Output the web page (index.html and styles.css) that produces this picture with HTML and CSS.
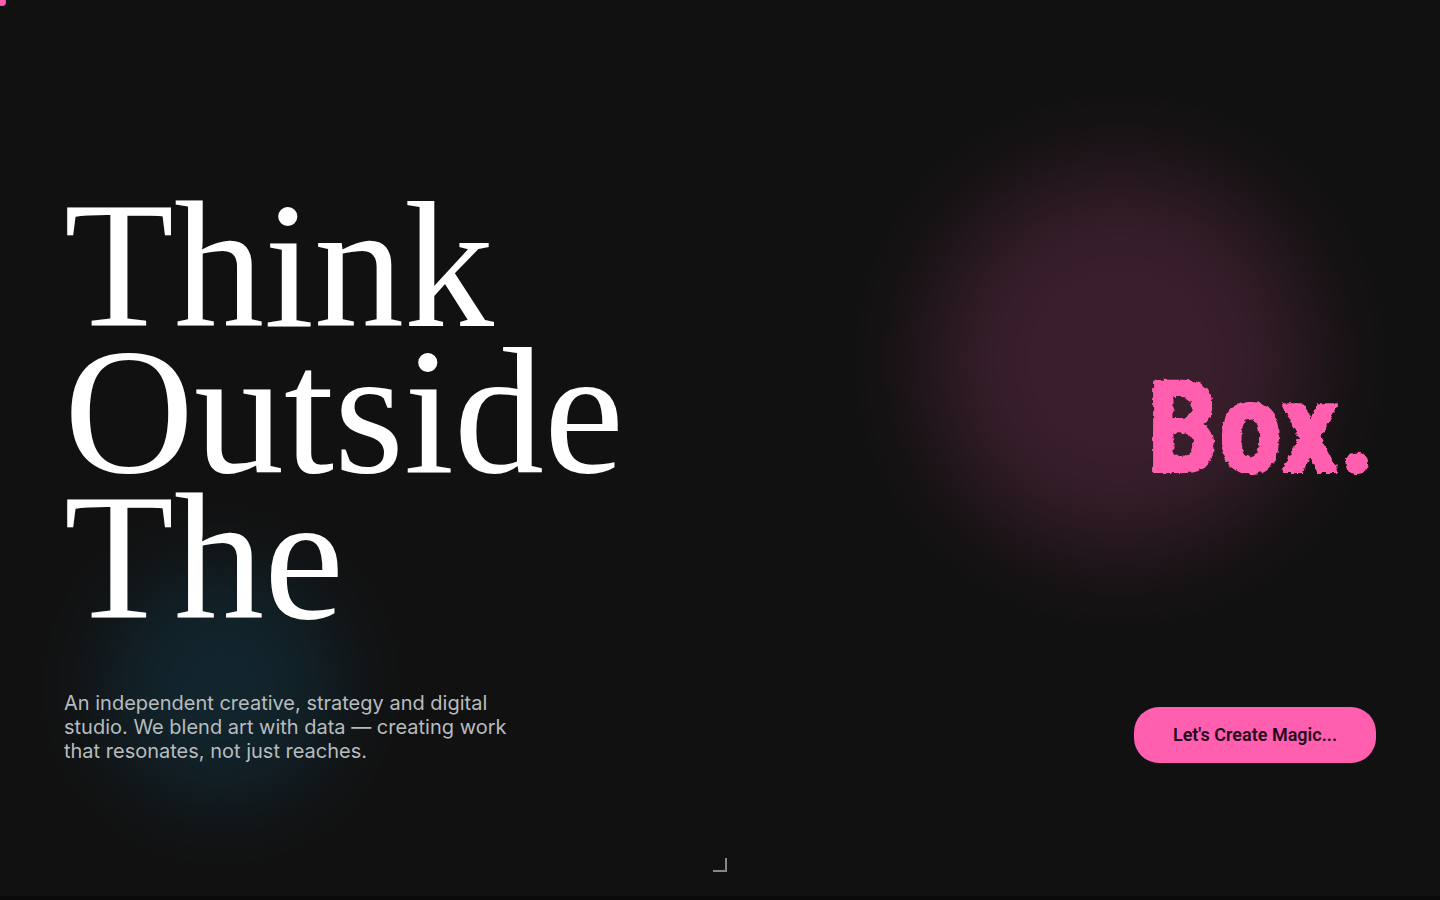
FILE: index.html
```html
<!DOCTYPE html>
<html lang="en">
<head>
  <meta charset="UTF-8" />
  <meta name="viewport" content="width=device-width, initial-scale=1" />
  <title>Think Outside The Box.</title>
  <link rel="stylesheet" href="styles.css">
</head>
<body>
  <div class="cursor"></div>

  <main class="hero">
    <div class="glow glow-pink"></div>
    <div class="glow glow-blue"></div>

    <h1 class="headline">
      <span class="headline-main">Think<br>Outside<br>The</span>
      <span class="headline-box">Box.</span>
    </h1>

    <div class="hero-bottom">
      <p class="intro">An independent creative, strategy and digital studio. We blend art with data — creating work that resonates, not just reaches.</p>
      <a class="cta" href="#contact">Let's Create Magic...</a>
    </div>

    <div class="scroll-hint"></div>
  </main>

  <!-- rough print edge for "Box." -->
  <svg class="defs" width="0" height="0" aria-hidden="true">
    <filter id="rough">
      <feMorphology in="SourceGraphic" operator="dilate" radius="1" result="bold" />
      <feTurbulence type="fractalNoise" baseFrequency="0.2" numOctaves="2" seed="4" result="noise" />
      <feDisplacementMap in="bold" in2="noise" scale="5" xChannelSelector="R" yChannelSelector="G" />
    </filter>
  </svg>
</body>
</html>
```

FILE: styles.css
```css
:root {
  --bg: #111111;
  --pink: #ff5fae;
  --blue: #1898d0;
  --text: #ffffff;
  --muted: #b8bcbf;
}

* {
  box-sizing: border-box;
}

body {
  margin: 0;
  background: var(--bg);
  color: var(--text);
  font-family: Inter, "Liberation Sans", sans-serif;
}

.cursor {
  position: fixed;
  top: -2px;
  left: -2px;
  width: 8px;
  height: 8px;
  border-radius: 50%;
  background: var(--pink);
  z-index: 10;
}

.hero {
  position: relative;
  min-height: 100vh;
  padding: 124px 64px 64px;
  display: flex;
  flex-direction: column;
  justify-content: center;
  gap: 60px;
  overflow: hidden;
  border-bottom: 4px solid #0a0a0a;
}

.glow {
  position: absolute;
  border-radius: 50%;
}

.glow-pink {
  top: 19%;
  right: 9%;
  width: 380px;
  height: 380px;
  background: var(--pink);
  opacity: 0.17;
  filter: blur(50px);
}

.glow-blue {
  bottom: 10%;
  left: 7%;
  width: 240px;
  height: 240px;
  background: var(--blue);
  opacity: 0.14;
  filter: blur(40px);
}

.headline {
  position: relative;
  margin: 0;
  display: flex;
  align-items: center;
  justify-content: space-between;
  font-weight: 400;
}

.headline-main {
  font-family: "Liberation Serif", serif;
  font-size: 180px;
  line-height: 146px;
}

.headline-box {
  padding-top: 32px;
  font-family: "Roboto Condensed", sans-serif;
  font-size: 128px;
  font-weight: 700;
  line-height: 146px;
  color: var(--pink);
  filter: url(#rough);
}

.hero-bottom {
  position: relative;
  display: flex;
  align-items: flex-end;
  justify-content: space-between;
}

.intro {
  margin: 0;
  max-width: 448px;
  font-size: 20px;
  line-height: 24px;
  color: var(--muted);
}

.cta {
  padding: 16px 39px;
  border-radius: 25px;
  background: var(--pink);
  color: #26061c;
  font-family: Roboto, sans-serif;
  font-size: 18px;
  font-weight: 600;
  line-height: 24px;
  text-decoration: none;
}

.scroll-hint {
  position: absolute;
  bottom: 24px;
  left: 50%;
  width: 14px;
  height: 14px;
  margin-left: -7px;
  border-right: 2px solid #888888;
  border-bottom: 2px solid #888888;
}

.defs {
  position: absolute;
}
```
